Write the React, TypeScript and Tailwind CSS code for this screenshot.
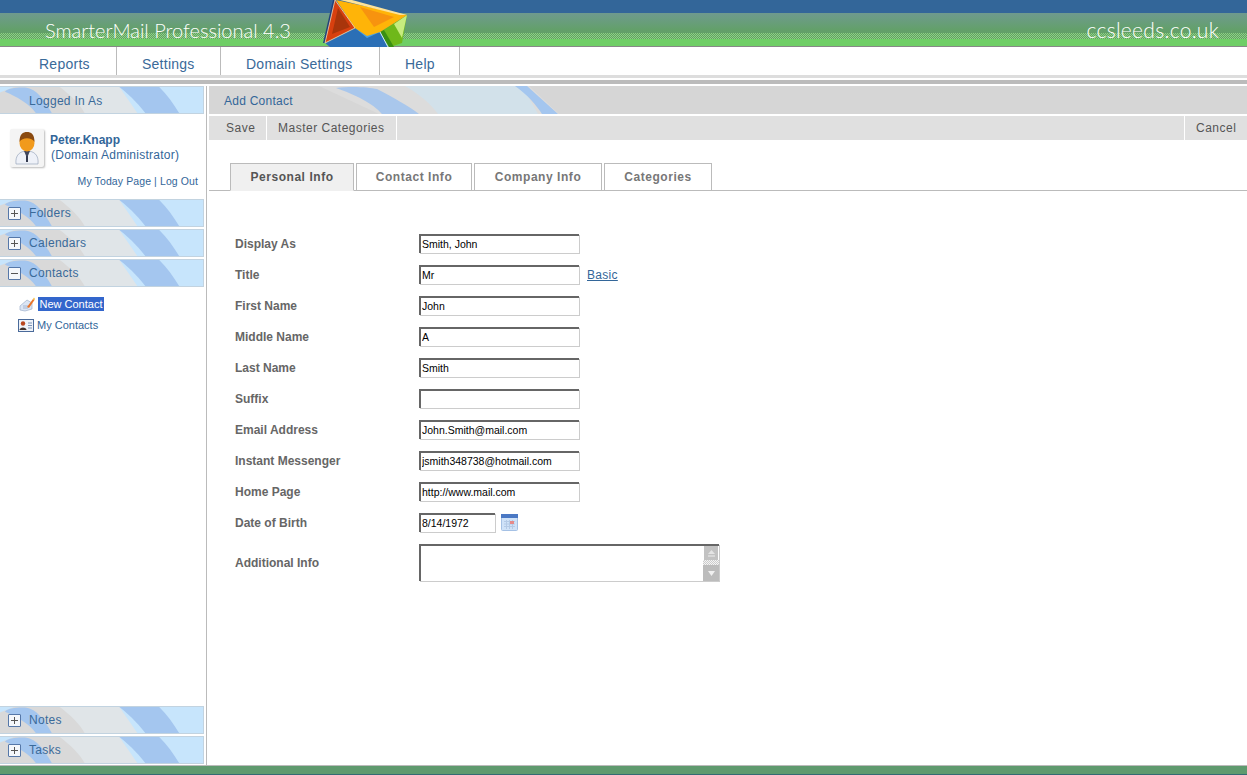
import { ReactNode } from 'react';

const sans = "font-['Liberation_Sans',Arial,sans-serif]";

const navItems = [
  { label: 'Reports', width: 'w-[117px]', pad: 'pl-[39px]' },
  { label: 'Settings', width: 'w-[104px]', pad: 'pl-[25px]' },
  { label: 'Domain Settings', width: 'w-[159px]', pad: 'pl-[25px]' },
  { label: 'Help', width: 'w-[80px]', pad: 'pl-[25px]' },
];

const fields = [
  { label: 'Display As', value: 'Smith, John' },
  { label: 'Title', value: 'Mr', link: 'Basic' },
  { label: 'First Name', value: 'John' },
  { label: 'Middle Name', value: 'A' },
  { label: 'Last Name', value: 'Smith' },
  { label: 'Suffix', value: '' },
  { label: 'Email Address', value: 'John.Smith@mail.com' },
  { label: 'Instant Messenger', value: 'jsmith348738@hotmail.com' },
  { label: 'Home Page', value: 'http://www.mail.com' },
];

const tabs = [
  { label: 'Personal Info', width: 'w-[124px]', active: true },
  { label: 'Contact Info', width: 'w-[116px]' },
  { label: 'Company Info', width: 'w-[128px]' },
  { label: 'Categories', width: 'w-[108px]' },
];

const inputClass =
  'h-[19px] border-2 border-t-[#666] border-l-[#666] border-r-0 border-b-0 shadow-[1px_1px_0_#ccc] bg-white pl-px pb-[2px] text-[10.5px] font-normal tracking-normal text-black outline-none';

// decorative brush strokes behind the sidebar panel headers
const PanelSwoosh = () => (
  <svg className="absolute inset-0 h-full w-full" viewBox="0 0 204 28" preserveAspectRatio="none">
    <rect width="204" height="28" fill="#c7e5fc" />
    <path d="M0 6 L14 0 H120 L136 28 H0 Z" fill="#d9d9d9" />
    <path d="M60 0 H120 L138 28 H85 C80 18 70 8 60 0 Z" fill="#e0e5e8" />
    <path d="M5 5 C8 1 20 0 28 1 C36 3 44 12 52 28 H36 C30 18 16 10 5 5 Z" fill="#a4c6ef" />
    <path d="M120 0 H160 C168 8 174 18 180 28 H146 C142 22 132 10 120 0 Z" fill="#a4c6ef" />
  </svg>
);

const Panel = ({ title, sign }: { title: string; sign?: '+' | '-' }) => (
  <div className="relative flex h-7 w-[204px] items-center border border-l-0 border-[#c2d3e0]">
    <PanelSwoosh />
    {sign && (
      <span className="relative ml-2 flex h-[13px] w-[13px] items-center justify-center rounded-[1px] border border-[#5577a8] bg-[#f4f7fb]">
        <span className="absolute h-px w-[7px] bg-[#555]" />
        {sign === '+' && <span className="absolute h-[7px] w-px bg-[#555]" />}
      </span>
    )}
    <span className={`relative text-[12px] tracking-[0.3px] text-[#3a6a99] ${sign ? '-mt-px ml-2' : 'mt-px ml-[29px]'}`}>
      {title}
    </span>
  </div>
);

const Logo = () => (
  <svg className="absolute left-[322px] top-0 h-[47px] w-[87px]" viewBox="0 0 87 47">
    <path d="M11 0 L1 43 L3 43 L14 0 Z" fill="#23407a" />
    <path d="M13 0 L3 43 L33 28 Z" fill="#d8400f" />
    <path d="M16 8 L10 34 L28 27 Z" fill="#a8350b" />
    <path d="M3 43 L33 28 L45 36 L58 32 L66 47 H8 Z" fill="#2b6fb6" />
    <path d="M33 28 L45 38 L58 32 L56 31 L45 35 Z" fill="#4aa0e0" />
    <path d="M58 32 L85 15 L80 43 L68 47 Z" fill="#6fb81a" />
    <path d="M85 15 L80 38 L72 24 Z" fill="#c7ec7e" />
    <path d="M62 30 L72 47 H67 L58 32 Z" fill="#3a8f12" />
    <path d="M14 0 L85 15 L58 32 L45 36 L33 28 Z" fill="#ffb408" />
    <path d="M38 7 L72 17 L52 27 Z" fill="#f7930f" />
    <path d="M18 0 H30 L85 15 L78 15 L30 3 Z" fill="#fde39a" />
    <path d="M3 43 L13 0 L33 28 Z" fill="none" stroke="#f2d6b0" strokeWidth="0.8" />
    <path d="M58 32 L66 47" stroke="#cfe9f7" strokeWidth="1" />
  </svg>
);

const Avatar = () => (
  <div className="flex h-[38px] w-[34px] items-center justify-center rounded-[2px] bg-[#f4f4f4] shadow-[1px_1px_2px_#bbb]">
    <svg width="26" height="34" viewBox="0 0 26 34">
      <path d="M2 33 C1 24 6 20 13 20 C20 20 25 24 24 33 Z" fill="#eef1f8" stroke="#9aa6bb" strokeWidth="0.7" />
      <path d="M10 20 L13 27 L16 20 Z" fill="#40465c" />
      <rect x="12" y="25" width="2" height="6" fill="#333a4f" />
      <ellipse cx="13" cy="12" rx="7.5" ry="8.5" fill="#f19a1c" />
      <path d="M5.5 11 C5.5 3 9 1 13 1 C17 1 20.5 3 20.5 11 C18 6 8 6 5.5 11 Z" fill="#8a4a10" />
    </svg>
  </div>
);

const NewContactIcon = () => (
  <svg width="16" height="15" viewBox="0 0 16 15">
    <path d="M1 9 L8 3 L13 6 L13 12 L6 14 L1 13 Z" fill="#dbe5f4" stroke="#9fb0cc" strokeWidth="0.7" />
    <path d="M4 9 H9 M4 11 H9" stroke="#8fa2c0" strokeWidth="0.7" />
    <path d="M8 10 L14 2 L15.5 3 L10 11 Z" fill="#e8742a" />
    <path d="M14 2 L15 0.5 L16 2 L15.5 3 Z" fill="#f6c23c" />
  </svg>
);

const MyContactsIcon = () => (
  <svg width="16" height="13" viewBox="0 0 16 13">
    <rect x="0.5" y="0.5" width="15" height="12" fill="#eef2f8" stroke="#4a6a9a" />
    <circle cx="5" cy="4.5" r="2.2" fill="#b8451c" />
    <path d="M1.5 11 C1.5 7.5 8.5 7.5 8.5 11 Z" fill="#40302a" />
    <path d="M10 4 H14 M10 6.5 H14 M10 9 H14" stroke="#7d93b5" />
  </svg>
);

const CalendarIcon = () => (
  <svg width="17" height="17" viewBox="0 0 17 17">
    <rect x="0.5" y="0.5" width="16" height="16" rx="1" fill="#cfe2f8" stroke="#a5c1e5" />
    <rect x="0" y="0" width="17" height="4" fill="#4a78c4" />
    <path d="M3 7.5 H14 M3 10 H14 M3 12.5 H14 M5.5 6 V15 M8.5 6 V15 M11.5 6 V15" stroke="#b4cae6" />
    <rect x="9" y="7" width="4" height="3" fill="#e58a8a" />
  </svg>
);

const ToolButton = ({ children, className }: { children: ReactNode; className: string }) => (
  <div className={`flex h-full items-center text-[12px] tracking-[0.5px] text-[#555] ${className}`}>{children}</div>
);

const Sidebar = () => (
  <aside className="flex w-[207px] shrink-0 flex-col border-r border-[#bbb]">
    <Panel title="Logged In As" />
    <div className="h-[85px] w-[204px]">
      <div className="flex pl-[10px] pt-[15px]">
        <Avatar />
        <div className="ml-[6px] pt-[4px] text-[12px] leading-[15px] text-[#336699]">
          <div className="font-bold">Peter.Knapp</div>
          <div className="pl-px tracking-[0.25px]">(Domain Administrator)</div>
        </div>
      </div>
      <div className="mt-[7px] pr-[6px] text-right text-[10.5px] leading-[14px] tracking-[0.1px] text-[#336699]">
        My Today Page | Log Out
      </div>
    </div>
    <div className="flex flex-col gap-[2px]">
      <Panel title="Folders" sign="+" />
      <Panel title="Calendars" sign="+" />
      <Panel title="Contacts" sign="-" />
    </div>
    <div className="flex flex-1 flex-col pt-[9px] text-[11px] text-[#336699]">
      <div className="flex h-[16px] items-center pl-[19px]">
        <NewContactIcon />
        <span className="ml-[3px] flex h-[14px] w-[66px] items-center justify-center bg-[#3366cc] text-white">New Contact</span>
      </div>
      <div className="mt-[5px] flex h-[16px] items-center pl-[18px]">
        <MyContactsIcon />
        <span className="ml-[3px]">My Contacts</span>
      </div>
    </div>
    <div className="flex flex-col gap-[2px] pb-px">
      <Panel title="Notes" sign="+" />
      <Panel title="Tasks" sign="+" />
    </div>
  </aside>
);

const TextareaScroll = () => (
  <div className="absolute right-0 top-[2px] flex w-[16px] flex-col items-center">
    <span className="flex h-[14px] w-[14px] items-center justify-center bg-[#c2c2c2]">
      <svg width="9" height="7" viewBox="0 0 9 7">
        <path d="M4.5 0 L8 4 H1 Z" fill="#e4e4e4" />
        <path d="M1 6 H8" stroke="#eee" />
      </svg>
    </span>
    <span className="h-[5px] w-[16px] bg-[repeating-conic-gradient(#ccc_0_25%,#f4f4f4_0_50%)] bg-[length:2px_2px]" />
    <span className="flex h-[16px] w-[16px] items-center justify-center bg-[#bcbcbc]">
      <svg width="9" height="7" viewBox="0 0 9 7">
        <path d="M1 1 H8 L4.5 6 Z" fill="#f0f0f0" />
      </svg>
    </span>
  </div>
);

const Form = () => (
  <div className="flex flex-col pl-[26px] pt-[43px] text-[12px] font-bold leading-5 text-[#666]">
    {fields.map((f) => (
      <div key={f.label} className="mb-[11px] flex h-5 items-start">
        <label className="w-[184px]">{f.label}</label>
        <input readOnly value={f.value} className={`${inputClass} w-[160px]`} />
        {f.link && <a className="ml-[8px] text-[12px] font-normal leading-[20px] tracking-[0.3px] text-[#336699] underline">{f.link}</a>}
      </div>
    ))}
    <div className="mb-[11px] flex h-5 items-start">
      <label className="w-[184px]">Date of Birth</label>
      <input readOnly value="8/14/1972" className={`${inputClass} w-[76px]`} />
      <span className="ml-[6px] mt-px flex"><CalendarIcon /></span>
    </div>
    <div className="flex h-[38px] items-center">
      <label className="w-[184px]">Additional Info</label>
      <div className="relative h-[37px] w-[300px] self-start">
        <textarea readOnly className="block h-[37px] w-[300px] resize-none overflow-hidden border-2 border-b-0 border-r-0 border-l-[#666] border-t-[#666] bg-white shadow-[1px_1px_0_#ccc] outline-none" />
        <TextareaScroll />
      </div>
    </div>
  </div>
);

const Main = () => (
  <main className="flex min-w-0 flex-1 flex-col pl-[2px]">
    <div className="relative flex h-7 items-center bg-[#d6d6d6]">
      <svg className="absolute left-0 top-0 h-7 w-[360px]" viewBox="0 0 360 28" preserveAspectRatio="none">
        <path d="M110 0 H320 L350 28 H170 Z" fill="#dcdcdc" />
        <path d="M196 0 H313 L329 28 H229 C222 18 210 8 196 0 Z" fill="#d2e1ea" />
        <path d="M127 2 C140 0 160 1 168 3 C185 12 200 20 210 28 H173 C165 18 145 8 127 2 Z" fill="#a9c7ec" />
        <path d="M306 0 H318 L349 28 H333 C328 20 318 8 306 0 Z" fill="#a4c6ef" />
      </svg>
      <span className="relative ml-[15px] mt-px text-[12px] tracking-[0.25px] text-[#336699]">Add Contact</span>
    </div>
    <div className="mt-[2px] flex h-6 items-stretch bg-[#e0e0e0]">
      <ToolButton className="w-[58px] border-r border-white pl-[17px]">Save</ToolButton>
      <ToolButton className="w-[130px] border-r border-white pl-[11px]">Master Categories</ToolButton>
      <div className="flex-1" />
      <ToolButton className="w-[63px] border-l border-white pl-[11px]">Cancel</ToolButton>
    </div>
    <div className="mt-[23px] flex h-[28px] gap-[2px] border-b border-[#bbb] pl-[21px]">
      {tabs.map((t) => (
        <div
          key={t.label}
          className={`flex h-[28px] items-center justify-center border border-[#bbb] text-[12px] font-bold tracking-[0.55px] ${t.width} ${
            t.active ? 'border-b-[#f0f0f0] bg-[#f0f0f0] text-[#555]' : 'bg-white text-[#777]'
          }`}
        >
          {t.label}
        </div>
      ))}
    </div>
    <Form />
  </main>
);

const App = () => (
  <div className={`flex h-[775px] w-full flex-col overflow-hidden bg-white ${sans}`}>
    <header className="relative h-[47px] shrink-0 bg-[#336699]">
      <div className="absolute inset-x-0 bottom-0 top-[13px] flex flex-col border-b border-[#888] bg-gradient-to-b from-[#6f9a8e] via-[#63a06a] to-[#5f9d5f]">
        <div className="mt-[20px] h-[6px] bg-[repeating-conic-gradient(#8dd088_0_25%,#62a160_0_50%)] bg-[length:2px_2px]" />
        <div className="h-[7px] bg-[#6fce66]" />
      </div>
      <Logo />
      <span className="absolute left-[45px] top-[17px] font-['Lato',sans-serif] text-[20px] font-light leading-[26px] text-white">
        SmarterMail Professional 4.3
      </span>
      <span className="absolute right-[28px] top-[17px] font-['Lato',sans-serif] text-[21px] font-light leading-[26px] tracking-[0.3px] text-white">
        ccsleeds.co.uk
      </span>
    </header>
    <nav className="flex h-[28px] shrink-0">
      {navItems.map((n) => (
        <div key={n.label} className={`flex items-center border-r border-[#bbb] pt-[6px] text-[14px] tracking-[0.25px] text-[#3a6a99] ${n.width} ${n.pad}`}>
          {n.label}
        </div>
      ))}
    </nav>
    <div className="h-[3px] shrink-0 bg-[#ddd]" />
    <div className="mt-[2px] h-[4px] shrink-0 bg-[#bbb]" />
    <div className="mt-[2px] flex min-h-0 flex-1">
      <Sidebar />
      <Main />
    </div>
    <footer className="h-[10px] shrink-0 border-t border-[#bbb] bg-[#5f9a6e]">
      <div className="mt-[8px] h-px bg-[#336b73]" />
    </footer>
  </div>
);

export default App;
